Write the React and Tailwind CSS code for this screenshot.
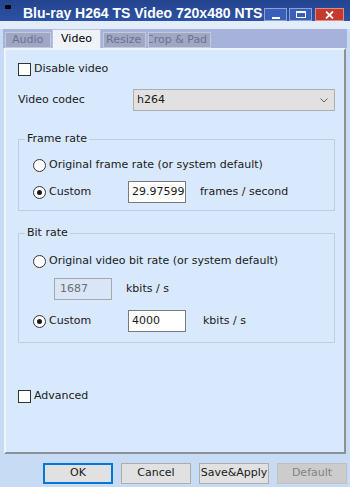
import React from "react";

const font = { fontFamily: '"DejaVu Sans", Verdana, sans-serif' };

function CheckBox({ label }) {
  return (
    <div className="flex items-center h-[14px]">
      <span className="w-[13px] h-[13px] bg-white border border-[#333] shrink-0" />
      <span className="ml-[3px] text-[11px] leading-[14px] text-[#1a1a1a]">{label}</span>
    </div>
  );
}

function Radio({ checked, label, className = "" }) {
  return (
    <div className={"flex items-center h-[14px] " + className}>
      <span className="w-[13px] h-[13px] rounded-full bg-white border border-[#333] flex items-center justify-center shrink-0">
        {checked && <span className="w-[5px] h-[5px] rounded-full bg-[#1a1a1a]" />}
      </span>
      <span className="ml-[3px] text-[11px] leading-[14px] text-[#1a1a1a] whitespace-nowrap">{label}</span>
    </div>
  );
}

function Field({ value, disabled }) {
  return (
    <div
      className={
        "w-[58px] h-[22px] border flex items-center overflow-hidden whitespace-nowrap text-[11px] " +
        (disabled ? "bg-[#d8e6f8] border-[#a8a8a8] text-[#6d6d6d] pl-[5px]" : "bg-white border-[#7a7a7a] text-[#1a1a1a] pl-[3px]")
      }
    >
      {value}
    </div>
  );
}

function Tab({ label, active, className = "", indent = "" }) {
  if (active) {
    return (
      <div className="h-[20px] w-[49px] bg-[#eef3fa] border border-b-0 border-[#b9c2d8] flex items-center justify-center text-[11px] text-black">
        {label}
      </div>
    );
  }
  return (
    <div
      className={
        "h-[16px] mt-[3px] bg-[#a0a7c3] border border-[#c3c9dc] flex items-center overflow-hidden whitespace-nowrap text-[11px] text-[#6a7290] shrink-0 " +
        className
      }
    >
      <span className={indent}>{label}</span>
    </div>
  );
}

function WinBtn({ children, className = "" }) {
  return (
    <div className={"h-[13px] border border-[#8aa2d8] flex items-center justify-center " + className}>
      {children}
    </div>
  );
}

export default function App() {
  return (
    <div className="w-[350px] h-[487px] bg-[#c8dbf5] overflow-hidden relative flex flex-col" style={font}>
      {/* Title bar */}
      <div className="h-[21px] bg-gradient-to-b from-[#24448e] to-[#2c52a6] flex items-start shrink-0">
        <div className="w-[6px] h-[4px] bg-black mt-[5px] ml-[5px] rounded-[1px]" />
        <div
          className="ml-[12px] w-[240px] overflow-hidden whitespace-nowrap text-white font-bold text-[14px] leading-[14px] mt-[6px]"
          style={{ fontFamily: '"Liberation Sans", Arial, sans-serif' }}
        >
          Blu-ray H264 TS Video 720x480 NTSC
        </div>
        <div className="flex mt-[8px] gap-[2px] ml-[1px]">
          <WinBtn className="w-[23px] bg-[#3a5fb8]">
            <span className="w-[8px] h-[2px] bg-white mt-[6px]" />
          </WinBtn>
          <WinBtn className="w-[23px] bg-[#3a5fb8]">
            <span className="w-[10px] h-[7px] border border-white border-t-2" />
          </WinBtn>
          <div className="w-[29px] h-[13px] bg-[#c63a2e] border border-[#e08a80] ml-[1px] flex items-center justify-center">
            <svg width="9" height="8" viewBox="0 0 9 8">
              <path d="M1 0.5 L8 7.5 M8 0.5 L1 7.5" stroke="white" strokeWidth="1.8" />
            </svg>
          </div>
        </div>
      </div>

      {/* band above tabs */}
      <div className="h-[8px] bg-[#e3ecf9] shrink-0" />

      {/* Tab strip */}
      <div className="h-[19px] mx-[3px] bg-[#a6b2da] flex pl-[2px] gap-[1px] shrink-0">
        <Tab label="Audio" className="w-[46px] pl-[6px]" />
        <Tab label="Video" active />
        <Tab label="Resize" className="w-[43px] pl-[2px] ml-[1px]" />
        <Tab label="Crop & Pad" className="w-[63px] ml-[1px]" indent="-ml-[3px]" />
      </div>

      {/* Panel */}
      <div className="mx-[4px] w-[342px] h-[406px] bg-[#d8e8fd] border-2 border-t-[#eef4fc] border-l-[#eef4fc] border-r-[#8a8f98] border-b-[#8a8f98] shrink-0">
        <div className="pl-[12px] pt-[12px] flex flex-col">
          <CheckBox label="Disable video" />

          <div className="flex items-center mt-[13px] h-[22px]">
            <span className="w-[115px] text-[11px] text-[#1a1a1a]">Video codec</span>
            <div className="w-[202px] h-[22px] bg-[#e1e1e1] border border-[#adadad] flex items-center justify-between pl-[3px] pr-[6px] text-[11px] text-[#1a1a1a]">
              <span>h264</span>
              <svg width="8" height="5" viewBox="0 0 8 5">
                <path d="M0.5 0.5 L4 4 L7.5 0.5" fill="none" stroke="#606060" strokeWidth="1" />
              </svg>
            </div>
          </div>

          {/* Frame rate */}
          <fieldset className="mt-[21px] w-[317px] border border-[#bccde6] px-0 pb-[7px]">
            <legend className="ml-[6px] px-[2px] text-[11px] leading-[14px] text-[#1a1a1a]">Frame rate</legend>
            <div className="pl-[14px] pt-[12px] flex flex-col">
              <Radio label="Original frame rate (or system default)" />
              <div className="flex items-center mt-[9px] h-[22px]">
                <Radio checked label="Custom" className="w-[95px]" />
                <Field value="29.975999" />
                <span className="ml-[14px] text-[11px] text-[#1a1a1a]">frames / second</span>
              </div>
            </div>
          </fieldset>

          {/* Bit rate */}
          <fieldset className="mt-[15px] w-[317px] border border-[#bccde6] px-0 pb-[10px]">
            <legend className="ml-[6px] px-[2px] text-[11px] leading-[14px] text-[#1a1a1a]">Bit rate</legend>
            <div className="pl-[14px] pt-[14px] flex flex-col">
              <Radio label="Original video bit rate (or system default)" />
              <div className="flex items-center mt-[10px] h-[22px] pl-[21px]">
                <Field value="1687" disabled />
                <span className="ml-[14px] text-[11px] text-[#1a1a1a]">kbits / s</span>
              </div>
              <div className="flex items-center mt-[10px] h-[22px]">
                <Radio checked label="Custom" className="w-[95px]" />
                <Field value="4000" />
                <span className="ml-[17px] text-[11px] text-[#1a1a1a]">kbits / s</span>
              </div>
            </div>
          </fieldset>

          <div className="mt-[46px]">
            <CheckBox label="Advanced" />
          </div>
        </div>
      </div>

      {/* Buttons */}
      <div className="flex pl-[43px] gap-[8px] mt-[9px] shrink-0">
        <button className="w-[70px] h-[21px] bg-[#e1e1e1] border-2 border-[#0078d7] text-[11px] text-[#1a1a1a]">OK</button>
        <button className="w-[70px] h-[21px] bg-[#e1e1e1] border border-[#adadad] text-[11px] text-[#1a1a1a]">Cancel</button>
        <button className="w-[70px] h-[21px] bg-[#e1e1e1] border border-[#adadad] text-[11px] text-[#1a1a1a]">Save&amp;Apply</button>
        <button className="w-[70px] h-[21px] bg-[#cccccc] border border-[#bfbfbf] text-[11px] text-[#838383]">Default</button>
      </div>
    </div>
  );
}
